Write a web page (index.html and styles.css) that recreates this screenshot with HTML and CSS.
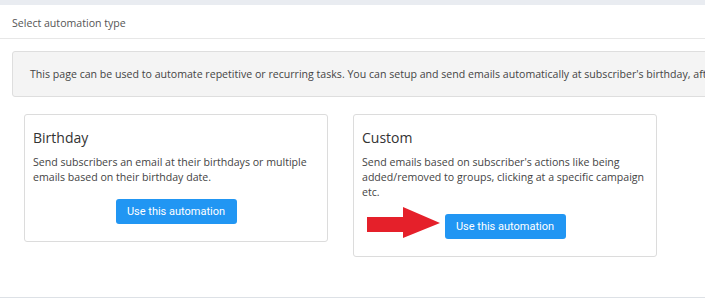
FILE: index.html
```html
<!DOCTYPE html>
<html>

<head>
    <meta charset="UTF-8">
    <title>Automations</title>
    <link rel="stylesheet" href="styles.css">
</head>

<body>
    <div id="topbar"></div>
    <div id="page">
        <div class="panel-heading">Select automation type</div>
        <div class="panel-body">
            <div class="info">
                This page can be used to automate repetitive or recurring tasks. You can setup and send emails automatically at subscriber's birthday, after they join a group or click a link in your campaign.
            </div>
            <div class="cards">
                <div class="card">
                    <div class="card-title">Birthday</div>
                    <div class="card-text">Send subscribers an email at their birthdays or multiple emails based on their birthday date.</div>
                    <div class="card-action">
                        <button class="btn">Use this automation</button>
                    </div>
                </div>
                <div class="card">
                    <div class="card-title">Custom</div>
                    <div class="card-text">Send emails based on subscriber's actions like being added/removed to groups, clicking at a specific campaign etc.</div>
                    <div class="card-action">
                        <div class="arrow">
                            <svg width="73" height="32" viewBox="0 0 73 32">
                                <polygon points="0,10 36,10 36,0 73,16 36,31 36,25 0,25" fill="#e5202a" />
                            </svg>
                        </div>
                        <button class="btn">Use this automation</button>
                    </div>
                </div>
            </div>
        </div>
    </div>
</body>

</html>
```

FILE: styles.css
```css
html,
body {
    margin: 0;
    height: 100%;
    overflow: hidden;
}

body {
    font-family: 'Open Sans', sans-serif;
    font-size: 10.6px;
    color: #444;
    background: #fff;
}

#topbar {
    height: 5px;
    background: #e9ecf1;
}

#page {
    width: 1100px;
    height: 292px;
    border-bottom: 1px solid #dde1e6;
}

.panel-heading {
    height: 33px;
    line-height: 36px;
    padding-left: 12px;
    border-bottom: 1px solid #e7e7e7;
    color: #555;
}

.panel-body {
    padding: 12px;
}

.info {
    height: 44px;
    line-height: 44px;
    padding-left: 17px;
    white-space: nowrap;
    background: #f4f4f4;
    border: 1px solid #dedede;
    border-radius: 3px;
    color: #444;
}

.cards {
    display: flex;
    align-items: flex-start;
    gap: 25px;
    margin-top: 17px;
    padding-left: 12px;
}

.card {
    width: 286px;
    padding: 14px 8px 17px;
    border: 1px solid #dcdcdc;
    border-radius: 3px;
}

.card-title {
    font-size: 14px;
    line-height: 18px;
    color: #333;
    margin-bottom: 8px;
}

.card-text {
    line-height: 15px;
}

.card-action {
    position: relative;
    display: flex;
    justify-content: center;
    margin-top: 14px;
}

.btn {
    height: 25px;
    width: 121px;
    padding: 0;
    border: none;
    border-radius: 3px;
    background: #2196f3;
    color: #fff;
    font-family: Roboto, sans-serif;
    font-size: 11px;
}

.arrow {
    position: absolute;
    left: 5px;
    top: -7px;
}

.arrow svg {
    display: block;
}
```
